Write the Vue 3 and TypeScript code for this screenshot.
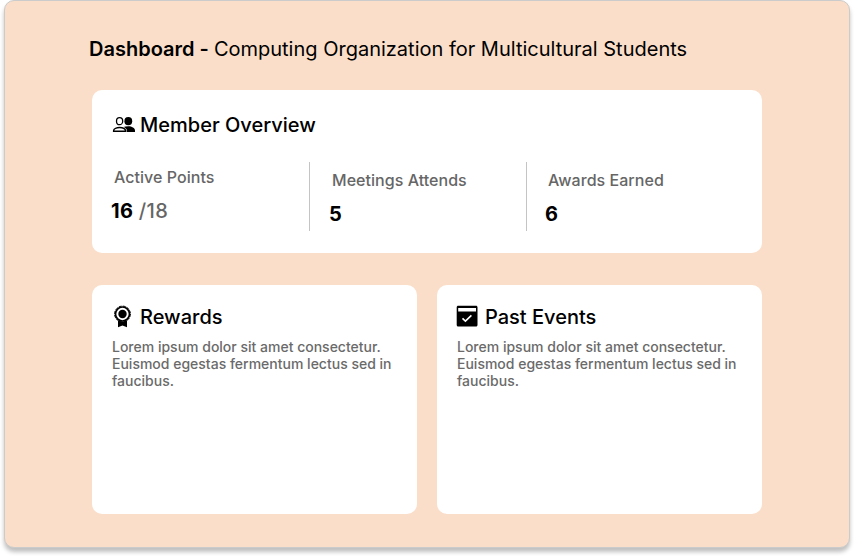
<script setup lang="ts">
interface Stat {
  label: string
  value: string
  total?: string
}

const stats: Stat[] = [
  { label: 'Active Points', value: '16', total: '/18' },
  { label: 'Meetings Attends', value: '5' },
  { label: 'Awards Earned', value: '6' },
]

const blurb: string[] = [
  'Lorem ipsum dolor sit amet consectetur.',
  'Euismod egestas fermentum lectus sed in',
  'faucibus.',
]
</script>

<template>
  <div class="page">
    <main class="panel">
      <h1 class="title"><strong>Dashboard - </strong><span>Computing Organization for Multicultural Students</span></h1>

      <section class="card overview">
        <h2 class="heading">
          <svg class="icon" width="24" height="24" viewBox="0 0 24 24">
            <ellipse cx="7.6" cy="8.2" rx="3.1" ry="3.5" fill="none" stroke="#000" stroke-width="1.3" />
            <path d="M1.600 18.200v-.5c0-2 3.200-3.200 6.100-3.200 2.600 0 5.400 1 6 3.200v.5z" fill="none" stroke="#000" stroke-width="1.400" />
            <ellipse cx="16.300" cy="8.200" rx="3.900" ry="4.100" />
            <path d="M11.400 14.100c1.400-.5 3.100-.8 4.900-.8 3.600 0 6.700 1.700 6.700 4.200V19h-8.200v-1.500c0-1.500-1.300-2.700-3.400-3.400z" />
          </svg>
          <span>Member Overview</span>
        </h2>
        <div class="stats">
          <div v-for="stat in stats" :key="stat.label" class="stat">
            <div class="label">{{ stat.label }}</div>
            <div class="value"><b>{{ stat.value }}</b><span v-if="stat.total">{{ stat.total }}</span></div>
          </div>
        </div>
      </section>

      <div class="row">
        <section class="card detail">
          <h2 class="heading">
            <svg class="icon" width="24" height="24" viewBox="0 0 24 24">
              <circle cx="10.5" cy="9" r="7" fill="none" stroke="#000" stroke-width="1.700" />
              <circle cx="10.500" cy="9" r="7.900" fill="none" stroke="#000" stroke-width="1" stroke-dasharray="3 1.137" />
              <circle cx="10.500" cy="9" r="4.200" />
              <path d="M6 15.200c1.300.9 2.800 1.300 4.500 1.300s3.200-.4 4.500-1.300v7.100l-4.500-1.800L6 22.300z" />
            </svg>
            <span>Rewards</span>
          </h2>
          <p><span v-for="line in blurb" :key="line">{{ line }}</span></p>
        </section>

        <section class="card detail">
          <h2 class="heading">
            <svg class="icon" width="24" height="24" viewBox="0 0 24 24">
              <path fill-rule="evenodd" d="M1.200.8h17.800c.9 0 1.500.6 1.500 1.500v17.700c0 .9-.6 1.500-1.500 1.500H1.200c-.9 0-1.500-.6-1.500-1.500V2.300C-.3 1.400.3.8 1.200.8zM1.200 3v3.500h17.800V3z" />
              <path d="M5.500 13.300l2.900 2.800 6-5.700" fill="none" stroke="#fff" stroke-width="1.600" />
            </svg>
            <span>Past Events</span>
          </h2>
          <p><span v-for="line in blurb" :key="line">{{ line }}</span></p>
        </section>
      </div>
    </main>
  </div>
</template>

<style>
body {
  margin: 0;
  background: #fff;
}
</style>

<style scoped>
.page {
  height: 556px;
  overflow: hidden;
}

.panel {
  box-sizing: border-box;
  width: 846px;
  height: 548px;
  margin-left: 4px;
  padding: 36px 87px 0;
  background: #fadec9;
  border: 1px solid #cbcbcb;
  border-radius: 10px;
  box-shadow: 0 4px 4px rgba(0, 0, 0, 0.25);
  font-family: Inter, sans-serif;
  color: #000;
}

.title {
  height: 24px;
  margin: 0 0 29px -3px;
  font-size: 20px;
  font-weight: 400;
  line-height: 24px;
  white-space: nowrap;
}

.title strong {
  font-weight: 600;
}

.card {
  box-sizing: border-box;
  background: #fff;
  border-radius: 10px;
}

.overview {
  width: 670px;
  height: 163px;
  padding: 23px 20px 0;
}

.heading {
  display: flex;
  align-items: center;
  gap: 4px;
  height: 24px;
  margin: 0;
  font-size: 20px;
  font-weight: 500;
  line-height: 24px;
}

.icon {
  flex: none;
  overflow: visible;
}

.stats {
  display: grid;
  grid-template-columns: 197px 217px 1fr;
  height: 69px;
  margin-top: 25px;
}

.stat {
  box-sizing: border-box;
  padding: 8px 0 0 20px;
  border-left: 1px solid #c4c4c4;
}

.stat:first-child {
  padding: 5px 0 0;
  border-left: 0;
}

.stat:last-child {
  padding-left: 19px;
}

.label {
  padding-left: 2px;
  height: 20px;
  color: #666;
  font-size: 16px;
  font-weight: 500;
  letter-spacing: 0.04px;
  line-height: 20px;
}

.value {
  display: flex;
  gap: 5px;
  height: 24px;
  margin: 12px 0 0 -1px;
  font-size: 20px;
  letter-spacing: 0.5px;
  line-height: 24px;
}

.value b {
  font-weight: 700;
}

.value span {
  color: #666;
  font-weight: 500;
}

.row {
  display: flex;
  gap: 20px;
  width: 670px;
  margin-top: 32px;
}

.detail {
  flex: 1;
  height: 229px;
  padding: 20px 20px 0;
}

.detail p {
  margin: 9px 0 0;
  color: #6a6a6a;
  font-size: 14px;
  font-weight: 500;
  line-height: 17px;
}

.detail p span {
  display: block;
  white-space: nowrap;
}
</style>
